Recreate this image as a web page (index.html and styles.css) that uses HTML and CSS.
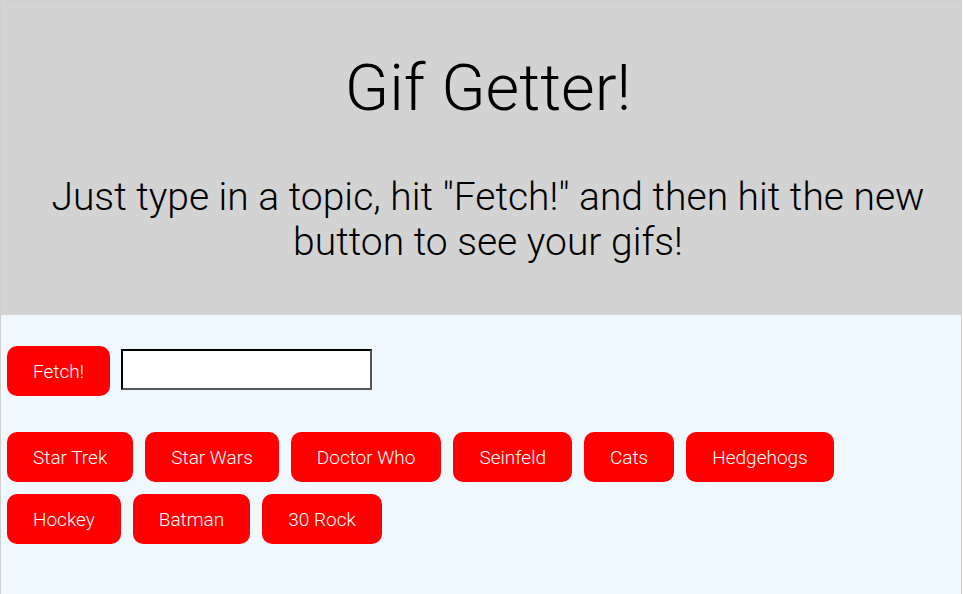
FILE: index.html
```html
<!DOCTYPE html>
<html>
<head>
<meta charset="utf-8">
<title>Gif Getter!</title>
<link rel="stylesheet" href="styles.css">
</head>
<body>
<div class="page">
  <header class="hero">
    <h1 class="title">Gif Getter!</h1>
    <p class="subtitle">Just type in a topic, hit "Fetch!" and then hit the new button to see your gifs!</p>
  </header>
  <main class="content">
    <div class="fetch-row">
      <button class="btn">Fetch!</button>
      <input class="topic-input" type="text">
    </div>
    <div class="tags">
      <button class="btn">Star Trek</button>
      <button class="btn">Star Wars</button>
      <button class="btn">Doctor Who</button>
      <button class="btn">Seinfeld</button>
      <button class="btn">Cats</button>
      <button class="btn">Hedgehogs</button>
      <button class="btn">Hockey</button>
      <button class="btn">Batman</button>
      <button class="btn">30 Rock</button>
    </div>
  </main>
</div>
</body>
</html>
```
FILE: styles.css
```css
html, body {
  margin: 0;
  padding: 0;
  height: 100%;
  background: #ffffff;
}
body {
  font-family: Roboto, "Liberation Sans", sans-serif;
}
.page {
  width: 962px;
  min-height: 594px;
  border: 1px solid #cfcfcf;
  border-bottom: none;
  background: #f0f8ff;
  box-sizing: border-box;
}
.hero {
  background: #d3d3d3;
  height: 314px;
  box-sizing: border-box;
  padding: 46px 0 0 14px;
  text-align: center;
  color: #000;
}
.title {
  margin: 0;
  font-size: 65px;
  font-weight: 300;
  line-height: 82px;
}
.subtitle {
  margin: 46px 20px 0;
  font-size: 39px;
  font-weight: 300;
  line-height: 45px;
}
.content {
  padding: 31px 0 0 6px;
}
.fetch-row {
  display: flex;
  align-items: center;
  gap: 11px;
}
.btn {
  height: 50px;
  padding: 0 26px;
  border: none;
  border-radius: 10px;
  background: #ff0000;
  color: #ffffff;
  font-family: Roboto, "Liberation Sans", sans-serif;
  font-size: 19px;
  font-weight: 300;
}
.topic-input {
  width: 251px;
  height: 41px;
  box-sizing: border-box;
  border: 2px solid;
  border-color: #000 #555 #555 #000;
  background: #fff;
  margin-top: -3px;
}
.tags {
  display: flex;
  flex-wrap: wrap;
  gap: 12px;
  margin-top: 36px;
  width: 840px;
}
```
